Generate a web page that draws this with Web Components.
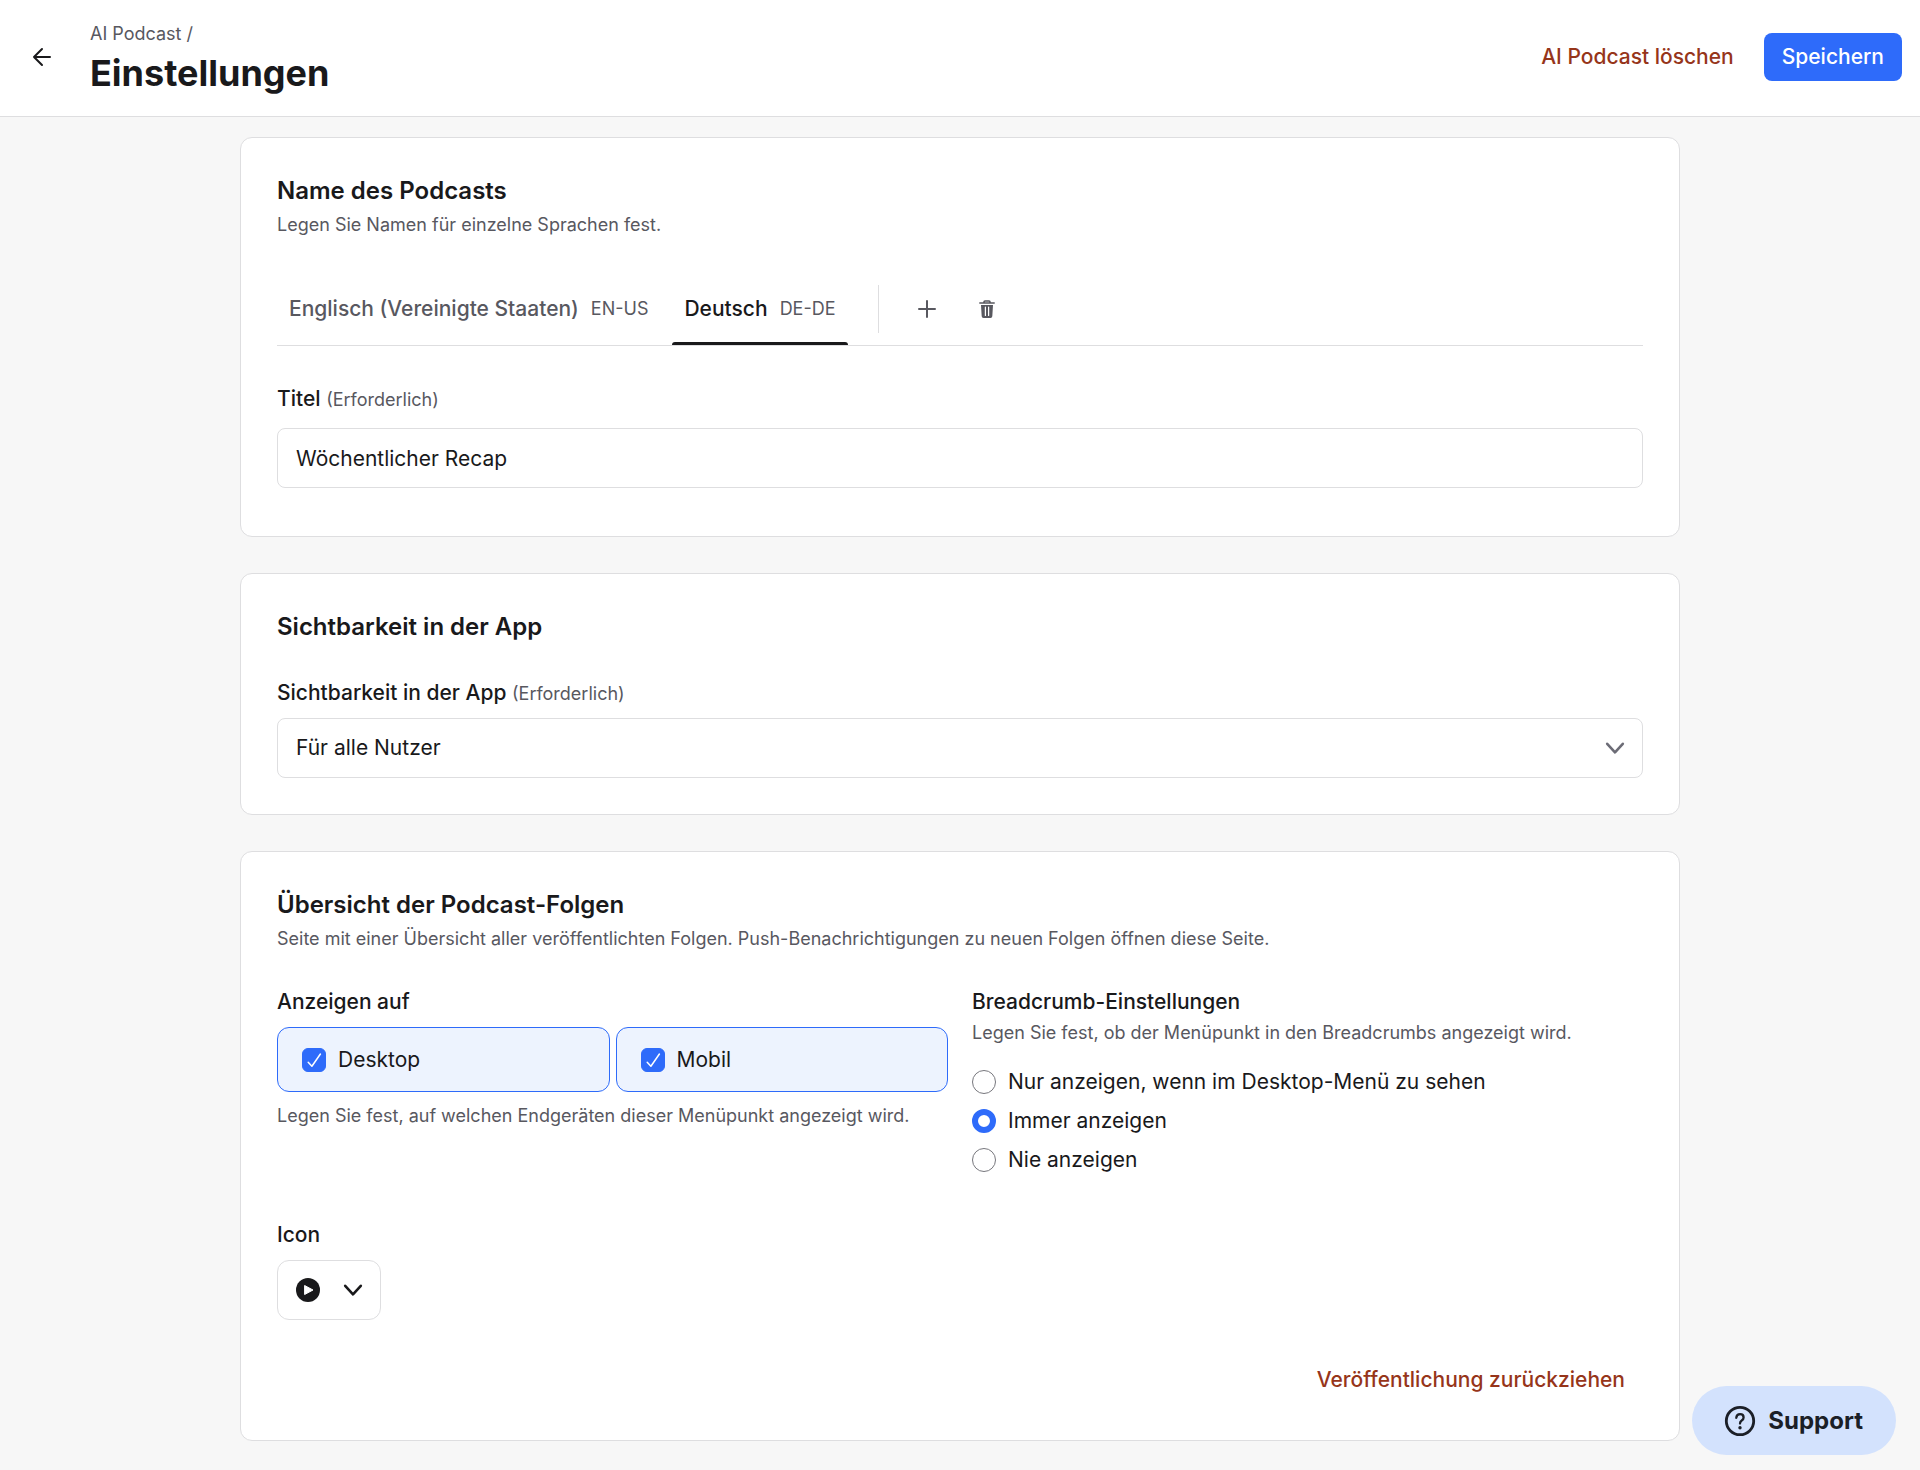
<!DOCTYPE html>
<html lang="de">
<head>
<meta charset="utf-8">
<meta name="viewport" content="width=device-width, initial-scale=1">
<title>Einstellungen – AI Podcast</title>
<style>
  :root {
    --bg: #f7f7f7;
    --surface: #ffffff;
    --line: #dedee0;
    --text: #19191b;
    --muted: #58585f;
    --blue: #2e6bfa;
    --blue-soft: #edf3fe;
    --danger: #96351a;
  }
  body {
    margin: 0;
    min-height: 100vh;
    background: var(--bg);
    color: var(--text);
    font: 400 21px/30px Inter, "Liberation Sans", sans-serif;
  }
  main {
    box-sizing: border-box;
    max-width: 1488px;
    margin: 0 auto;
    padding: 20px 24px 28px;
    display: flex;
    flex-direction: column;
    gap: 36px;
  }
  .columns {
    display: grid;
    grid-template-columns: repeat(2, minmax(0, 1fr));
    gap: 41px 24px;
  }
  .tiles {
    display: grid;
    grid-template-columns: 1fr 1fr;
    gap: 6px;
  }
  .actions {
    display: flex;
    justify-content: flex-end;
    margin-top: 36px;
  }
</style>
</head>
<body>
  <page-header section="AI Podcast" heading="Einstellungen">
    <ui-button slot="actions" variant="danger">AI Podcast löschen</ui-button>
    <ui-button slot="actions" variant="primary">Speichern</ui-button>
  </page-header>

  <main>
    <settings-card heading="Name des Podcasts" description="Legen Sie Namen für einzelne Sprachen fest.">
      <language-tabs></language-tabs>
      <text-field label="Titel" value="Wöchentlicher Recap"></text-field>
    </settings-card>

    <settings-card heading="Sichtbarkeit in der App">
      <select-field label="Sichtbarkeit in der App" options="Für alle Nutzer|Für ausgewählte Gruppen"></select-field>
    </settings-card>

    <settings-card heading="Übersicht der Podcast-Folgen" description="Seite mit einer Übersicht aller veröffentlichten Folgen. Push-Benachrichtigungen zu neuen Folgen öffnen diese Seite.">
      <div class="columns">
        <field-group label="Anzeigen auf" hint="Legen Sie fest, auf welchen Endgeräten dieser Menüpunkt angezeigt wird.">
          <div class="tiles">
            <check-tile label="Desktop"></check-tile>
            <check-tile label="Mobil"></check-tile>
          </div>
        </field-group>
        <radio-list label="Breadcrumb-Einstellungen" hint="Legen Sie fest, ob der Menüpunkt in den Breadcrumbs angezeigt wird." options="Nur anzeigen, wenn im Desktop-Menü zu sehen|Immer anzeigen|Nie anzeigen" selected="1"></radio-list>
        <field-group label="Icon">
          <icon-picker></icon-picker>
        </field-group>
      </div>
      <div class="actions">
        <ui-button variant="danger">Veröffentlichung zurückziehen</ui-button>
      </div>
    </settings-card>
  </main>

  <support-button></support-button>

<script>
const ICONS = {
  back: '<svg width="24" height="24" viewBox="0 0 24 24" fill="none" stroke="currentColor" stroke-width="2" stroke-linecap="round" stroke-linejoin="round"><path d="M20 12H4M12 4L4 12l8 8"/></svg>',
  plus: '<svg width="24" height="24" viewBox="0 0 24 24" fill="none" stroke="currentColor" stroke-width="2" stroke-linecap="round"><path d="M12 4v16M4 12h16"/></svg>',
  trash: '<svg width="24" height="24" viewBox="0 0 24 24"><path d="M9 6V5q0-1 1-1h4q1 0 1 1v1" fill="none" stroke="currentColor" stroke-width="1.6"/><path d="M4.800 6h14.400" stroke="currentColor" stroke-width="1.500" stroke-linecap="round"/><path d="M6 8h12l-.7 11.200q-.1 1.800-1.800 1.800h-7q-1.700 0-1.800-1.800z" fill="currentColor"/><path d="M10.400 10v8.500M13.600 10v8.500" stroke="#fff" stroke-width="1.200" stroke-linecap="round"/></svg>',
  chevron: '<svg width="24" height="24" viewBox="0 0 24 24" fill="none" stroke="currentColor" stroke-width="2.600" stroke-linecap="round" stroke-linejoin="round"><path d="M4.200 7.800l7.800 8.600 7.800-8.600"/></svg>',
  check: '<svg width="24" height="24" viewBox="0 0 24 24" fill="none" stroke="#fff" stroke-width="1.500" stroke-linecap="round" stroke-linejoin="round"><path d="M6.200 14.200l3.700 4L18.400 6"/></svg>',
  play: '<svg width="24" height="24" viewBox="0 0 24 24"><circle cx="12" cy="12" r="12" fill="currentColor"/><path d="M8.600 7.500v9l8.400-4.500z" fill="#fff" stroke="#fff" stroke-width="1" stroke-linejoin="round"/></svg>',
  help: '<svg width="32" height="32" viewBox="0 0 32 32" fill="none" stroke="currentColor" stroke-linecap="round"><circle cx="16" cy="16" r="13.700" stroke-width="2.800"/><path d="M12.300 12.800q.2-3.600 3.800-3.600 3.500 0 3.500 3.300 0 1.800-1.900 3-1.700 1.100-1.700 3.100" stroke-width="2.300"/><circle cx="16" cy="22.700" r="1.700" fill="currentColor" stroke="none"/></svg>'
};

// Shared rules, every shadow root starts with these
const BASE = `
  :host { display: block; }
  *, *::before, *::after { box-sizing: border-box; }
  h1, h2, p { margin: 0; }
  svg { display: block; flex: none; }
  button, input, select { font: inherit; color: inherit; }
  button { cursor: pointer; }
  .label { display: block; font-weight: 500; margin-bottom: 10px; }
  .hint { font-size: 18px; line-height: 26px; font-weight: 400; color: var(--muted); }
`;

class BaseElement extends HTMLElement {
  constructor() {
    super();
    this.attachShadow({ mode: 'open' });
  }

  connectedCallback() {
    this.shadowRoot.innerHTML = `<style>${BASE}${this.styles()}</style>${this.markup()}`;
  }

  attr(name) {
    return this.getAttribute(name) || '';
  }
}

class UiButton extends BaseElement {
  styles() {
    return `
      button {
        height: 48px;
        padding: 0 18px;
        border: 0;
        border-radius: 8px;
        background: transparent;
        font-weight: 500;
        white-space: nowrap;
      }
      .danger { color: var(--danger); }
      .primary { background: var(--blue); color: #fff; }
    `;
  }

  markup() {
    return `<button type="button" class="${this.attr('variant')}"><slot></slot></button>`;
  }
}
customElements.define('ui-button', UiButton);

class PageHeader extends BaseElement {
  styles() {
    return `
      header {
        display: flex;
        align-items: center;
        padding: 19px 18px 21px;
        background: var(--surface);
        border-bottom: 1px solid var(--line);
      }
      .back {
        display: grid;
        place-items: center;
        width: 48px;
        height: 48px;
        margin-right: 24px;
        color: var(--text);
      }
      .titles { flex: 1; padding-top: 2px; }
      .crumb a { color: inherit; text-decoration: none; }
      h1 { margin-top: 4px; font-size: 36px; line-height: 44px; font-weight: 700; }
      .actions { display: flex; gap: 12px; }
    `;
  }

  markup() {
    return `
      <header>
        <a class="back" href="#" aria-label="Zurück">${ICONS.back}</a>
        <div class="titles">
          <p class="hint crumb"><a href="#">${this.attr('section')}</a> /</p>
          <h1>${this.attr('heading')}</h1>
        </div>
        <div class="actions"><slot name="actions"></slot></div>
      </header>
    `;
  }
}
customElements.define('page-header', PageHeader);

class SettingsCard extends BaseElement {
  styles() {
    return `
      section {
        padding: 36px;
        background: var(--surface);
        border: 1px solid var(--line);
        border-radius: 12px;
      }
      h2 { font-size: 24px; line-height: 33px; font-weight: 600; }
      .hint { margin-top: 5px; }
      .body { margin-top: 35px; }
    `;
  }

  markup() {
    const description = this.attr('description');
    return `
      <section>
        <h2>${this.attr('heading')}</h2>
        ${description ? `<p class="hint">${description}</p>` : ''}
        <div class="body"><slot></slot></div>
      </section>
    `;
  }
}
customElements.define('settings-card', SettingsCard);

class LanguageTabs extends BaseElement {
  constructor() {
    super();
    this.languages = [
      { name: 'Englisch (Vereinigte Staaten)', code: 'EN-US' },
      { name: 'Deutsch', code: 'DE-DE' }
    ];
    this.active = 1;
  }

  connectedCallback() {
    super.connectedCallback();
    this.shadowRoot.querySelectorAll('[role="tab"]').forEach((tab, i) => {
      tab.addEventListener('click', () => {
        this.active = i;
        this.connectedCallback();
      });
    });
  }

  styles() {
    return `
      :host { margin-bottom: 38px; }
      .bar {
        display: flex;
        align-items: center;
        border-bottom: 1px solid var(--line);
      }
      .tabs { display: flex; gap: 12px; }
      button { border: 0; background: none; color: var(--muted); }
      .tab {
        position: relative;
        display: flex;
        align-items: center;
        gap: 12px;
        height: 72px;
        padding: 0 12px;
        font-weight: 500;
      }
      .code { font-size: 18px; font-weight: 400; color: var(--muted); }
      .tab[aria-selected="true"] { color: var(--text); }
      .tab[aria-selected="true"]::after {
        content: "";
        position: absolute;
        left: 0;
        right: 0;
        bottom: 0;
        height: 3px;
        border-radius: 3px 3px 0 0;
        background: var(--text);
      }
      .tools {
        display: flex;
        gap: 12px;
        height: 48px;
        margin-left: 30px;
        padding-left: 24px;
        border-left: 1px solid var(--line);
      }
      .tools button {
        display: grid;
        place-items: center;
        width: 48px;
        padding: 0;
      }
    `;
  }

  markup() {
    return `
      <div class="bar">
        <div class="tabs" role="tablist">
          ${this.languages.map((lang, i) => `
            <button type="button" class="tab" role="tab" aria-selected="${i === this.active}">
              <span>${lang.name}</span><span class="code">${lang.code}</span>
            </button>`).join('')}
        </div>
        <div class="tools">
          <button type="button" aria-label="Sprache hinzufügen">${ICONS.plus}</button>
          <button type="button" aria-label="Sprache entfernen">${ICONS.trash}</button>
        </div>
      </div>
    `;
  }
}
customElements.define('language-tabs', LanguageTabs);

const CONTROL = `
  .control {
    width: 100%;
    height: 60px;
    padding: 0 18px;
    border: 1px solid var(--line);
    border-radius: 8px;
    background: var(--surface);
  }
`;

class TextField extends BaseElement {
  styles() {
    return `
      ${CONTROL}
      :host { margin-bottom: 12px; }
      .label { margin-bottom: 14px; }
    `;
  }

  markup() {
    return `
      <label class="label" for="field">${this.attr('label')} <span class="hint">(Erforderlich)</span></label>
      <input class="control" id="field" type="text" required value="${this.attr('value')}">
    `;
  }
}
customElements.define('text-field', TextField);

class SelectField extends BaseElement {
  styles() {
    return `
      ${CONTROL}
      .wrap { display: grid; align-items: center; }
      .wrap > * { grid-area: 1 / 1; }
      select { appearance: none; }
      svg { justify-self: end; margin-right: 16px; color: #6c6c76; pointer-events: none; }
    `;
  }

  markup() {
    return `
      <label class="label" for="field">${this.attr('label')} <span class="hint">(Erforderlich)</span></label>
      <div class="wrap">
        <select class="control" id="field" required>
          ${this.attr('options').split('|').map(option => `<option>${option}</option>`).join('')}
        </select>
        ${ICONS.chevron}
      </div>
    `;
  }
}
customElements.define('select-field', SelectField);

class FieldGroup extends BaseElement {
  styles() {
    return `.hint { margin-top: 11px; }`;
  }

  markup() {
    const hint = this.attr('hint');
    return `
      <div role="group" aria-labelledby="label">
        <span class="label" id="label">${this.attr('label')}</span>
        <slot></slot>
        ${hint ? `<p class="hint">${hint}</p>` : ''}
      </div>
    `;
  }
}
customElements.define('field-group', FieldGroup);

class CheckTile extends BaseElement {
  styles() {
    return `
      label {
        display: flex;
        align-items: center;
        gap: 12px;
        height: 65px;
        padding: 0 24px;
        border: 1px solid var(--line);
        border-radius: 12px;
        cursor: pointer;
      }
      label:has(:checked) { border-color: var(--blue); background: var(--blue-soft); }
      .box { display: grid; }
      .box > * { grid-area: 1 / 1; }
      input {
        appearance: none;
        width: 24px;
        height: 24px;
        margin: 0;
        border: 1px solid #85858c;
        border-radius: 6px;
      }
      input:checked { border-color: var(--blue); background: var(--blue); }
      svg { pointer-events: none; }
    `;
  }

  markup() {
    return `
      <label>
        <span class="box"><input type="checkbox" checked>${ICONS.check}</span>
        <span>${this.attr('label')}</span>
      </label>
    `;
  }
}
customElements.define('check-tile', CheckTile);

class RadioList extends BaseElement {
  styles() {
    return `
      .label { margin-bottom: 3px; }
      .options { margin-top: 16px; }
      .option {
        display: flex;
        align-items: center;
        gap: 12px;
        height: 39px;
        cursor: pointer;
      }
      input {
        appearance: none;
        width: 24px;
        height: 24px;
        margin: 0;
        border: 1px solid #77777d;
        border-radius: 50%;
        background: #fff;
      }
      input:checked { border: 6px solid var(--blue); }
    `;
  }

  markup() {
    const selected = Number(this.attr('selected'));
    return `
      <div role="radiogroup" aria-labelledby="label">
        <span class="label" id="label">${this.attr('label')}</span>
        <p class="hint">${this.attr('hint')}</p>
        <div class="options">
          ${this.attr('options').split('|').map((option, i) => `
            <label class="option">
              <input type="radio" name="option" ${i === selected ? 'checked' : ''}>
              <span>${option}</span>
            </label>`).join('')}
        </div>
      </div>
    `;
  }
}
customElements.define('radio-list', RadioList);

class IconPicker extends BaseElement {
  styles() {
    return `
      button {
        display: flex;
        align-items: center;
        gap: 21px;
        height: 60px;
        padding: 0 15px 0 18px;
        border: 1px solid var(--line);
        border-radius: 12px;
        background: var(--surface);
      }
    `;
  }

  markup() {
    return `<button type="button" aria-label="Icon auswählen">${ICONS.play}${ICONS.chevron}</button>`;
  }
}
customElements.define('icon-picker', IconPicker);

class SupportButton extends BaseElement {
  styles() {
    return `
      :host { position: fixed; right: 24px; bottom: 15px; }
      button {
        display: flex;
        align-items: center;
        gap: 12px;
        height: 69px;
        padding: 0 33px 0 32px;
        border: 0;
        border-radius: 35px;
        background: #d3e2fd;
        color: #1b1f27;
        font-size: 24px;
        font-weight: 700;
      }
    `;
  }

  markup() {
    return `<button type="button">${ICONS.help}<span>Support</span></button>`;
  }
}
customElements.define('support-button', SupportButton);
</script>
</body>
</html>
